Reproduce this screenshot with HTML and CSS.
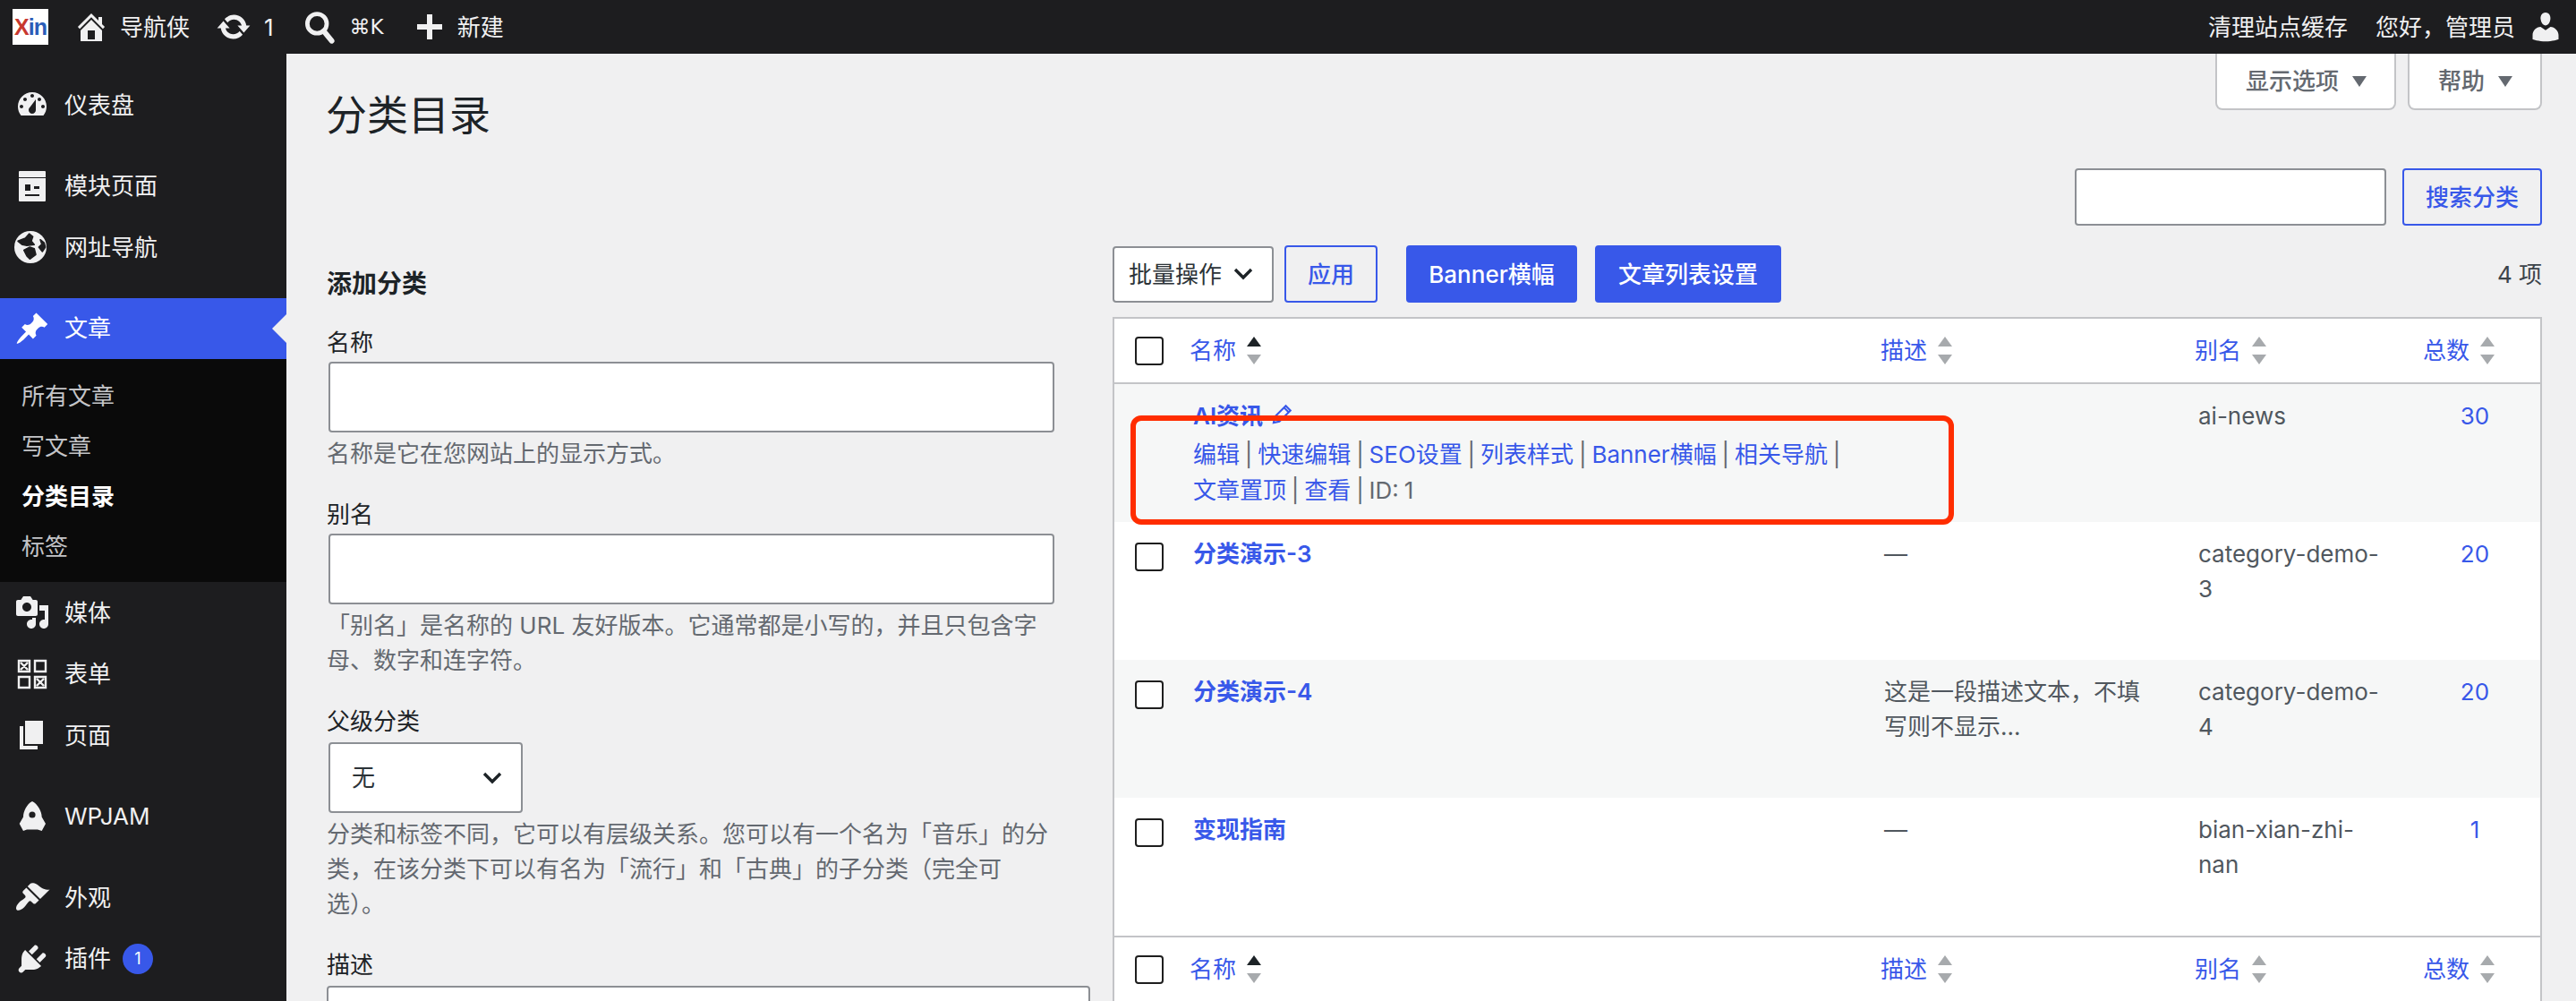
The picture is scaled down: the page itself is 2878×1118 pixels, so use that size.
FILE: index.html
```html
<!DOCTYPE html>
<html lang="zh-CN">
<head>
    <meta charset="UTF-8">
    <meta name="viewport" content="width=device-width, initial-scale=1.0">
    <title>分类目录</title>
    <link rel="stylesheet" href="styles.css">
</head>
<body>
    <!-- 顶部工具栏 -->
    <header class="adminbar">
        <div class="bar-group">
            <div class="logo"><span class="logo-x">X</span><span class="logo-in">in</span></div>
            <a class="bar-item home"><svg class="bar-icon" viewBox="0 0 20 20"><path fill-rule="evenodd" d="M16 8.5l1.53 1.53-1.06 1.06L10 4.62l-6.47 6.47-1.06-1.06L10 2.5l4 4v-2h2v4zm-6-2.46l6 5.99V18H4v-5.97zM12 17v-5H8v5h4z"/></svg>导航侠</a>
            <a class="bar-item updates"><svg class="bar-icon" viewBox="0 0 20 20"><path d="M10.2 3.28c3.53 0 6.43 2.61 6.92 6h2.08l-3.5 4-3.5-4h2.32c-.45-1.97-2.21-3.44-4.32-3.44-1.45 0-2.73.71-3.54 1.78L4.95 5.66C6.23 4.2 8.11 3.28 10.2 3.28zm-.4 13.44c-3.52 0-6.43-2.61-6.92-6H.8l3.5-4c1.17 1.33 2.33 2.67 3.5 4H5.48c.45 1.97 2.21 3.44 4.32 3.44 1.45 0 2.73-.71 3.54-1.78l1.71 1.95c-1.28 1.46-3.15 2.39-5.25 2.39z"/></svg>1</a>
            <a class="bar-item search"><svg class="bar-icon" viewBox="0 0 20 20"><circle cx="8.6" cy="8.2" r="5.4" fill="none" stroke="currentColor" stroke-width="2.4"/><path d="M12.4 12.4l4.4 5.4" fill="none" stroke="currentColor" stroke-width="3" stroke-linecap="round"/></svg><span class="cmd-key">⌘K</span></a>
            <a class="bar-item add"><svg class="bar-icon" viewBox="0 0 20 20"><path d="M17 8.5v3h-5.5V17h-3v-5.5H3v-3h5.5V3h3v5.5z"/></svg>新建</a>
        </div>
        <div class="bar-group">
            <a class="bar-item cache">清理站点缓存</a>
            <a class="bar-item account">您好&#xFF0C;管理员<svg class="bar-icon" viewBox="0 0 20 20"><path d="M10 9.25c-2.27 0-2.73-3.44-2.73-3.44C7 4.02 7.82 2 9.97 2c2.16 0 2.98 2.02 2.71 3.81 0 0-.41 3.44-2.68 3.44zm0 2.57L12.72 10c2.39 0 4.52 2.33 4.52 4.53v2.49s-3.65 1.13-7.24 1.13c-3.65 0-7.24-1.13-7.24-1.13v-2.49c0-2.25 1.94-4.48 4.47-4.48z"/></svg></a>
        </div>
    </header>

    <div class="layout">
        <!-- 左侧菜单 -->
        <nav class="sidebar">
            <a class="menu-item"><svg class="menu-icon" viewBox="0 0 20 20"><path fill-rule="evenodd" d="M3.76 16h12.48c1.1-1.37 1.76-3.11 1.76-5 0-4.42-3.58-8-8-8s-8 3.58-8 8c0 1.89.66 3.63 1.76 5zM10 4c.55 0 1 .45 1 1s-.45 1-1 1-1-.45-1-1 .45-1 1-1zM6 6c.55 0 1 .45 1 1s-.45 1-1 1-1-.45-1-1 .45-1 1-1zm8 0c.55 0 1 .45 1 1s-.45 1-1 1-1-.45-1-1 .45-1 1-1zm-5.37 5.55L12 7v6c0 1.1-.9 2-2 2s-2-.9-2-2c0-.57.24-1.08.63-1.45zM4 10c.55 0 1 .45 1 1s-.45 1-1 1-1-.45-1-1 .45-1 1-1zm12 0c.55 0 1 .45 1 1s-.45 1-1 1-1-.45-1-1 .45-1 1-1z"/></svg>仪表盘</a>
            <div class="menu-sep"></div>
            <a class="menu-item"><svg class="menu-icon" viewBox="0 0 40 40"><path fill-rule="evenodd" d="M6 3h28a1 1 0 0 1 1 1v6H5V4a1 1 0 0 1 1-1zM5 11h30v25a1 1 0 0 1-1 1H6a1 1 0 0 1-1-1zm7 7v7h6v-7zm10 2v3h6v-3zM12 29v2h16v-2z"/></svg>模块页面</a>
            <a class="menu-item"><svg class="menu-icon" viewBox="0 0 40 40"><circle cx="18" cy="20" r="18"/><path class="globe-land" d="M16.7 5L12.3 10L4 13.3L9 17.3L14 18.3L22.3 17.3L19 13.3L20.7 8.3zM10.7 23.3L17.3 20L22.3 21.7L24 28.3L17.3 33.3L14 30zM29 11.7L33.3 15L34.7 20L31.3 25L27.3 20L30.7 16.7z"/></svg>网址导航</a>
            <div class="menu-sep"></div>
            <a class="menu-item active"><svg class="menu-icon" viewBox="0 0 20 20"><path d="M10.44 3.02l1.82-1.82 6.36 6.35-1.83 1.82c-1.05-.68-2.48-.57-3.41.36l-.75.75c-.92.93-1.04 2.35-.35 3.41l-1.83 1.82-2.41-2.41-2.8 2.79c-.42.42-3.38 2.71-3.8 2.29s1.86-3.39 2.28-3.81l2.79-2.79L4.1 9.36l1.83-1.82c1.05.69 2.48.57 3.4-.36l.75-.75c.93-.92 1.05-2.35.36-3.41z"/></svg>文章</a>
            <div class="submenu">
                <a class="sub-item">所有文章</a>
                <a class="sub-item">写文章</a>
                <a class="sub-item current">分类目录</a>
                <a class="sub-item">标签</a>
            </div>
            <a class="menu-item"><svg class="menu-icon" viewBox="0 0 20 20"><path fill-rule="evenodd" d="M13 11V4c0-.55-.45-1-1-1h-1.67L9 1H5L3.67 3H2c-.55 0-1 .45-1 1v7c0 .55.45 1 1 1h10c.55 0 1-.45 1-1zM7 4.5c1.38 0 2.5 1.12 2.5 2.5S8.38 9.5 7 9.5 4.5 8.38 4.5 7 5.62 4.5 7 4.5zM14 6h5v10.5c0 1.38-1.12 2.5-2.5 2.5S14 17.88 14 16.5s1.12-2.5 2.5-2.5c.17 0 .34.02.5.05V9h-3V6zm-4 8.05V13h2v3.5c0 1.38-1.12 2.5-2.5 2.5S7 17.88 7 16.5 8.12 14 9.5 14c.17 0 .34.02.5.05z"/></svg>媒体</a>
            <a class="menu-item"><svg class="menu-icon form-icon" viewBox="0 0 40 40"><path d="M5 5h12v12H5zM23 5h12v12H23zM5 23h12v12H5zM23 23h12v12H23zM7 7l8 8M15 7l-8 8M25 25l8 8M33 25l-8 8"/></svg>表单</a>
            <a class="menu-item"><svg class="menu-icon" viewBox="0 0 20 20"><path d="M6 15V2h10v13H6zm-1 1h8v2H3V5h2v11z"/></svg>页面</a>
            <div class="menu-sep"></div>
            <a class="menu-item"><svg class="menu-icon" viewBox="0 0 40 40"><path fill-rule="evenodd" d="M20 3c6 3 10.7 11 10.7 17.5L35 28l-4.3 8-4.7-1.5H14L10 36l-4.3-8L10 20.5C10 14 14 6 20 3zm0 11.4a3.6 3.6 0 1 0 0 7.2 3.6 3.6 0 0 0 0-7.2z"/></svg>WPJAM</a>
            <div class="menu-sep"></div>
            <a class="menu-item"><svg class="menu-icon" viewBox="0 0 20 20"><path d="M14.48 11.06L7.41 3.99l1.5-1.5c.5-.56 2.3-.47 3.51.32 1.21.8 1.43 1.28 2.91 2.1 1.18.64 2.45 1.26 4.45.85zm-.71.71L6.7 4.7 4.93 6.47c-.39.39-.39 1.02 0 1.41l1.06 1.06c.39.39.39 1.03 0 1.42-.6.6-1.43 1.11-2.21 1.69-.35.26-.7.53-1.01.84-1.56 1.55-2.2 3.41-1.42 4.19.77.78 2.63.14 4.19-1.41.31-.31.58-.66.84-1.01.58-.78 1.09-1.61 1.69-2.21.39-.39 1.03-.39 1.42 0l1.06 1.06c.39.39 1.02.39 1.41 0z"/></svg>外观</a>
            <a class="menu-item"><svg class="menu-icon" viewBox="0 0 20 20"><path d="M13.11 4.36L9.87 7.6 8 5.73l3.24-3.24c.35-.34 1.05-.2 1.56.32.52.51.66 1.21.31 1.55zm-8 1.77l.91-1.12 9.01 9.01-1.19.84c-.71.71-2.63 1.16-3.82 1.16H6.14L4.9 17.26c-.59.59-1.54.59-2.12 0-.59-.58-.59-1.53 0-2.12l1.24-1.24v-3.88c0-1.13.4-3.19 1.09-3.89zm7.26 3.97l3.24-3.24c.34-.35 1.04-.21 1.55.31.52.51.66 1.21.31 1.55l-3.24 3.25z"/></svg>插件<span class="menu-badge">1</span></a>
        </nav>

        <!-- 主内容 -->
        <main class="content">
            <div class="page-head">
                <h1 class="page-title">分类目录</h1>
                <div class="screen-tabs">
                    <button class="screen-tab">显示选项<i class="tab-arrow"></i></button>
                    <button class="screen-tab">帮助<i class="tab-arrow"></i></button>
                </div>
            </div>

            <div class="columns">
                <section class="col-left">
                    <h2 class="form-title">添加分类</h2>
                    <div class="field">
                        <label class="field-label">名称</label>
                        <input class="text-input" type="text">
                        <p class="field-help">名称是它在您网站上的显示方式。</p>
                    </div>
                    <div class="field">
                        <label class="field-label">别名</label>
                        <input class="text-input" type="text">
                        <p class="field-help">「别名」是名称的 URL 友好版本。它通常都是小写的&#xFF0C;并且只包含字母、数字和连字符。</p>
                    </div>
                    <div class="field">
                        <label class="field-label">父级分类</label>
                        <div class="select parent-select">
                            <span>无</span>
                            <svg class="chevron" viewBox="0 0 24 16"><path d="M3 3l9 9 9-9"/></svg>
                        </div>
                        <p class="field-help">分类和标签不同&#xFF0C;它可以有层级关系。您可以有一个名为「音乐」的分类&#xFF0C;在该分类下可以有名为「流行」和「古典」的子分类&#xFF08;完全可选&#xFF09;。</p>
                    </div>
                    <div class="field desc-field">
                        <label class="field-label">描述</label>
                        <textarea class="text-area"></textarea>
                    </div>
                </section>

                <section class="col-right">
                    <div class="search-row">
                        <input class="text-input search-input" type="text">
                        <button class="btn btn-outline search-btn">搜索分类</button>
                    </div>

                    <div class="tablenav">
                        <div class="select bulk-select">
                            <span>批量操作</span>
                            <svg class="chevron" viewBox="0 0 24 16"><path d="M3 3l9 9 9-9"/></svg>
                        </div>
                        <button class="btn btn-outline apply-btn">应用</button>
                        <button class="btn btn-primary banner-btn">Banner横幅</button>
                        <button class="btn btn-primary list-btn">文章列表设置</button>
                        <span class="item-count">4 项</span>
                    </div>

                    <div class="table-wrap">
                        <table class="term-table">
                            <colgroup>
                                <col class="col-cb">
                                <col class="col-name">
                                <col class="col-desc">
                                <col class="col-slug">
                                <col>
                            </colgroup>
                            <thead>
                                <tr>
                                    <th class="cb-cell"><span class="checkbox"></span></th>
                                    <th><a class="sort-link">名称<span class="sort-arrows"><i class="up on"></i><i class="down"></i></span></a></th>
                                    <th><a class="sort-link">描述<span class="sort-arrows"><i class="up"></i><i class="down"></i></span></a></th>
                                    <th><a class="sort-link">别名<span class="sort-arrows"><i class="up"></i><i class="down"></i></span></a></th>
                                    <th class="num-head"><a class="sort-link">总数<span class="sort-arrows"><i class="up"></i><i class="down"></i></span></a></th>
                                </tr>
                            </thead>
                            <tbody>
                                <tr class="alt">
                                    <td class="cb-cell"></td>
                                    <td>
                                        <a class="term-name">AI资讯</a><svg class="edit-icon" viewBox="0 0 20 20"><path d="M3 17l1-5L13.5 2.5l4 4L8 16zM12 4l4 4"/></svg>
                                        <div class="row-actions">
                                            <span><a>编辑</a> |</span>
                                            <span><a>快速编辑</a> |</span>
                                            <span><a>SEO设置</a> |</span>
                                            <span><a>列表样式</a> |</span>
                                            <span><a>Banner横幅</a> |</span>
                                            <span><a>相关导航</a> |</span>
                                            <span><a>文章置顶</a> |</span>
                                            <span><a>查看</a> |</span>
                                            <span>ID: 1</span>
                                        </div>
                                    </td>
                                    <td></td>
                                    <td class="slug">ai-news</td>
                                    <td class="num"><a>30</a></td>
                                </tr>
                                <tr>
                                    <td class="cb-cell"><span class="checkbox"></span></td>
                                    <td><a class="term-name">分类演示-3</a></td>
                                    <td class="desc">—</td>
                                    <td class="slug">category-demo-<wbr>3</td>
                                    <td class="num"><a>20</a></td>
                                </tr>
                                <tr class="alt">
                                    <td class="cb-cell"><span class="checkbox"></span></td>
                                    <td><a class="term-name">分类演示-4</a></td>
                                    <td class="desc">这是一段描述文本&#xFF0C;不填写则不显示...</td>
                                    <td class="slug">category-demo-<wbr>4</td>
                                    <td class="num"><a>20</a></td>
                                </tr>
                                <tr>
                                    <td class="cb-cell"><span class="checkbox"></span></td>
                                    <td><a class="term-name">变现指南</a></td>
                                    <td class="desc">—</td>
                                    <td class="slug">bian-xian-zhi-<wbr>nan</td>
                                    <td class="num"><a>1</a></td>
                                </tr>
                            </tbody>
                            <tfoot>
                                <tr>
                                    <th class="cb-cell"><span class="checkbox"></span></th>
                                    <th><a class="sort-link">名称<span class="sort-arrows"><i class="up on"></i><i class="down"></i></span></a></th>
                                    <th><a class="sort-link">描述<span class="sort-arrows"><i class="up"></i><i class="down"></i></span></a></th>
                                    <th><a class="sort-link">别名<span class="sort-arrows"><i class="up"></i><i class="down"></i></span></a></th>
                                    <th class="num-head"><a class="sort-link">总数<span class="sort-arrows"><i class="up"></i><i class="down"></i></span></a></th>
                                </tr>
                            </tfoot>
                        </table>
                        <!-- 截图上的红色标注框 -->
                        <div class="red-mark"></div>
                    </div>
                </section>
            </div>
        </main>
    </div>
</body>
</html>
```

FILE: styles.css
```css
* {
    margin: 0;
    padding: 0;
    box-sizing: border-box;
}

body {
    font-family: "Inter", "Noto Sans CJK SC", sans-serif;
    font-size: 26px;
    line-height: 39px;
    color: #3c434a;
    background: #f0f0f1;
    height: 100vh;
    overflow: hidden;
}

a {
    color: #3858e9;
    text-decoration: none;
}

/* 顶部工具栏 */
.adminbar {
    height: 60px;
    background: #1d1d1f;
    color: #f0f0f1;
    display: flex;
    justify-content: space-between;
    align-items: center;
    padding: 0 19px 0 14px;
}

.bar-group {
    display: flex;
    align-items: center;
}

.bar-item {
    display: flex;
    align-items: center;
    color: #f0f0f1;
    white-space: nowrap;
}

.bar-icon {
    width: 40px;
    height: 40px;
    fill: currentColor;
    flex-shrink: 0;
}

.logo {
    width: 40px;
    height: 40px;
    background: #fff;
    display: flex;
    align-items: center;
    justify-content: center;
    font-family: "Liberation Sans", sans-serif;
    font-weight: 700;
    font-size: 25px;
    line-height: 40px;
    letter-spacing: -1px;
}

.logo-x {
    color: #c8382f;
}

.logo-in {
    color: #2a5db8;
}

.home {
    margin-left: 28px;
}

.home .bar-icon {
    margin-right: 12px;
}

.updates {
    margin-left: 29px;
}

.updates .bar-icon {
    margin-right: 14px;
}

.search {
    margin-left: 31px;
}

.search .bar-icon {
    margin-right: 14px;
}

.cmd-key {
    font-family: "DejaVu Sans", sans-serif;
    font-size: 23px;
}

.add {
    margin-left: 31px;
}

.add .bar-icon {
    margin-right: 11px;
}

.cache {
    margin-right: 31px;
}

.account .bar-icon {
    margin-left: 14px;
    margin-right: -5px;
}

/* 左侧菜单 */
.layout {
    display: flex;
    height: calc(100vh - 60px);
}

.sidebar {
    width: 320px;
    flex-shrink: 0;
    background: #1d1d1f;
    padding-top: 23px;
}

.menu-item {
    height: 68.5px;
    display: flex;
    align-items: center;
    padding-left: 16px;
    color: #f0f0f1;
    position: relative;
}

.menu-icon {
    width: 40px;
    height: 40px;
    fill: #f0f0f1;
    margin-right: 16px;
    flex-shrink: 0;
}

.globe-land {
    fill: #1d1d1f;
    stroke: #1d1d1f;
    stroke-width: 1.5;
    stroke-linejoin: round;
}

.form-icon path {
    fill: none;
    stroke: #f0f0f1;
    stroke-width: 2.4;
}

.menu-sep {
    height: 22px;
}

.menu-item.active {
    background: #3858e9;
    color: #fff;
}

.menu-item.active .menu-icon {
    fill: #fff;
}

.menu-item.active::after {
    content: "";
    position: absolute;
    right: 0;
    top: 50%;
    margin-top: -16px;
    border: 16px solid transparent;
    border-right-color: #f0f0f1;
    border-left-width: 0;
}

.menu-badge {
    width: 34px;
    height: 34px;
    margin-left: 13px;
    border-radius: 50%;
    background: #3858e9;
    color: #fff;
    font-size: 18px;
    line-height: 34px;
    text-align: center;
}

.submenu {
    background: #0a0a0a;
    height: 249px;
    padding-top: 21px;
}

.sub-item {
    display: block;
    height: 56px;
    line-height: 42px;
    padding-left: 24px;
    color: #c3c4c7;
}

.sub-item.current {
    color: #fff;
    font-weight: 600;
}

/* 主内容 */
.content {
    flex: 1;
    padding: 0 38px 0 45px;
    min-width: 0;
}

.page-head {
    height: 128px;
    display: flex;
    justify-content: space-between;
    align-items: flex-start;
}

.page-title {
    font-size: 46px;
    font-weight: 400;
    line-height: 60px;
    padding-top: 38px;
    height: 98px;
    margin-left: -1px;
    color: #1d2327;
}

.screen-tabs {
    display: flex;
    gap: 13px;
}

.screen-tab {
    height: 63px;
    padding: 0 31px 0 32px;
    display: flex;
    align-items: center;
    gap: 15px;
    font: inherit;
    font-weight: 500;
    color: #646970;
    background: #fff;
    border: 2px solid #c3c4c7;
    border-top: 0;
    border-radius: 0 0 8px 8px;
}

.tab-arrow {
    width: 0;
    height: 0;
    border-left: 8px solid transparent;
    border-right: 8px solid transparent;
    border-top: 12px solid #646970;
}

.columns {
    display: flex;
}

.col-left {
    width: 878px;
    flex-shrink: 0;
    padding-top: 108px;
}

.col-right {
    flex: 1;
    min-width: 0;
}

.form-title {
    font-size: 28px;
    font-weight: 600;
    line-height: 42px;
    margin-bottom: 25px;
    color: #1d2327;
}

.field {
    width: 813px;
    margin-bottom: 29px;
}

.desc-field {
    width: 853px;
}

.field-label {
    display: block;
    color: #1d2327;
}

.field-help {
    margin-top: 4px;
    color: #646970;
}

.text-input {
    display: block;
    width: 811px;
    height: 79px;
    margin: 2px 0 0 2px;
    background: #fff;
    border: 2px solid #8c8f94;
    border-radius: 4px;
}

.text-area {
    display: block;
    width: 100%;
    height: 120px;
    margin-top: 4px;
    background: #fff;
    border: 2px solid #8c8f94;
    border-radius: 4px;
    resize: none;
}

.select {
    display: flex;
    align-items: center;
    justify-content: space-between;
    background: #fff;
    border: 2px solid #8c8f94;
    border-radius: 4px;
    color: #2c3338;
}

.parent-select {
    width: 217px;
    height: 79px;
    margin: 4px 0 0 2px;
    padding: 0 20px 0 24px;
}

.bulk-select {
    width: 180px;
    height: 63px;
    padding: 0 20px 0 16px;
}

.chevron {
    width: 24px;
    height: 16px;
    fill: none;
    stroke: #1d2327;
    stroke-width: 3.4;
}

.search-row {
    display: flex;
    justify-content: flex-end;
    gap: 18px;
    height: 64px;
}

.search-input {
    width: 348px;
    height: 64px;
    margin: 0;
}

.btn {
    font: inherit;
    font-weight: 500;
    height: 64px;
    border-radius: 4px;
    white-space: nowrap;
}

.btn-outline {
    background: #f0f0f1;
    color: #3858e9;
    border: 2px solid #3858e9;
}

.btn-primary {
    background: #3858e9;
    color: #fff;
    border: 2px solid #3858e9;
}

.search-btn {
    width: 156px;
}

.tablenav {
    display: flex;
    align-items: center;
    height: 64px;
    margin-top: 22px;
}

.apply-btn {
    width: 104px;
    margin-left: 12px;
}

.banner-btn {
    width: 191px;
    margin-left: 32px;
}

.list-btn {
    width: 208px;
    margin-left: 20px;
}

.item-count {
    margin-left: auto;
}

/* 分类表格 */
.table-wrap {
    position: relative;
    margin-top: 16px;
    background: #fff;
    border: 2px solid #c3c4c7;
    border-bottom: 0;
}

.term-table {
    width: 100%;
    table-layout: fixed;
    border-collapse: separate;
    border-spacing: 0;
}

.col-cb {
    width: 80px;
}

.col-name {
    width: 772px;
}

.col-desc {
    width: 351px;
}

.col-slug {
    width: 248px;
}

.term-table th {
    height: 73px;
    padding-left: 4px;
    text-align: left;
    font-weight: 400;
}

.term-table thead th {
    border-bottom: 2px solid #c3c4c7;
}

.term-table tfoot th {
    border-top: 2px solid #c3c4c7;
}

.term-table td {
    height: 154px;
    padding: 16px 8px 0;
    vertical-align: top;
}

.term-table .cb-cell {
    padding: 0 0 0 23px;
}

.term-table td.cb-cell {
    padding-top: 23px;
}

.checkbox {
    display: block;
    width: 32px;
    height: 32px;
    background: #fff;
    border: 2px solid #1e1e1e;
    border-radius: 4px;
}

.alt td {
    background: #f6f7f7;
}

.sort-link {
    display: inline-flex;
    align-items: center;
}

.sort-arrows {
    display: flex;
    flex-direction: column;
    gap: 9px;
    margin-left: 12px;
}

.sort-arrows i {
    display: block;
    width: 0;
    height: 0;
    border-left: 8px solid transparent;
    border-right: 8px solid transparent;
}

.sort-arrows .up {
    border-bottom: 11px solid #a7aaad;
}

.sort-arrows .down {
    border-top: 11px solid #a7aaad;
}

.sort-arrows .up.on {
    border-bottom-color: #1d2327;
}

.term-table .num-head {
    padding-left: 11px;
}

.term-name {
    font-weight: 600;
}

.edit-icon {
    width: 26px;
    height: 26px;
    margin-left: 8px;
    vertical-align: -2px;
    fill: none;
    stroke: #3858e9;
    stroke-width: 1.6;
}

.row-actions {
    margin-top: 4px;
    line-height: 40px;
    color: #646970;
    word-spacing: -1.5px;
}

.row-actions span {
    white-space: nowrap;
}

.term-table .desc {
    color: #50575e;
    padding-right: 40px;
}

.term-table .slug {
    color: #50575e;
    padding-right: 36px;
}

.term-table .num {
    text-align: center;
    padding-right: 12px;
}

/* 红色标注框 */
.red-mark {
    position: absolute;
    top: 108px;
    left: 18px;
    width: 920px;
    height: 122px;
    border: 6px solid #ff2d00;
    border-radius: 12px;
}
```
